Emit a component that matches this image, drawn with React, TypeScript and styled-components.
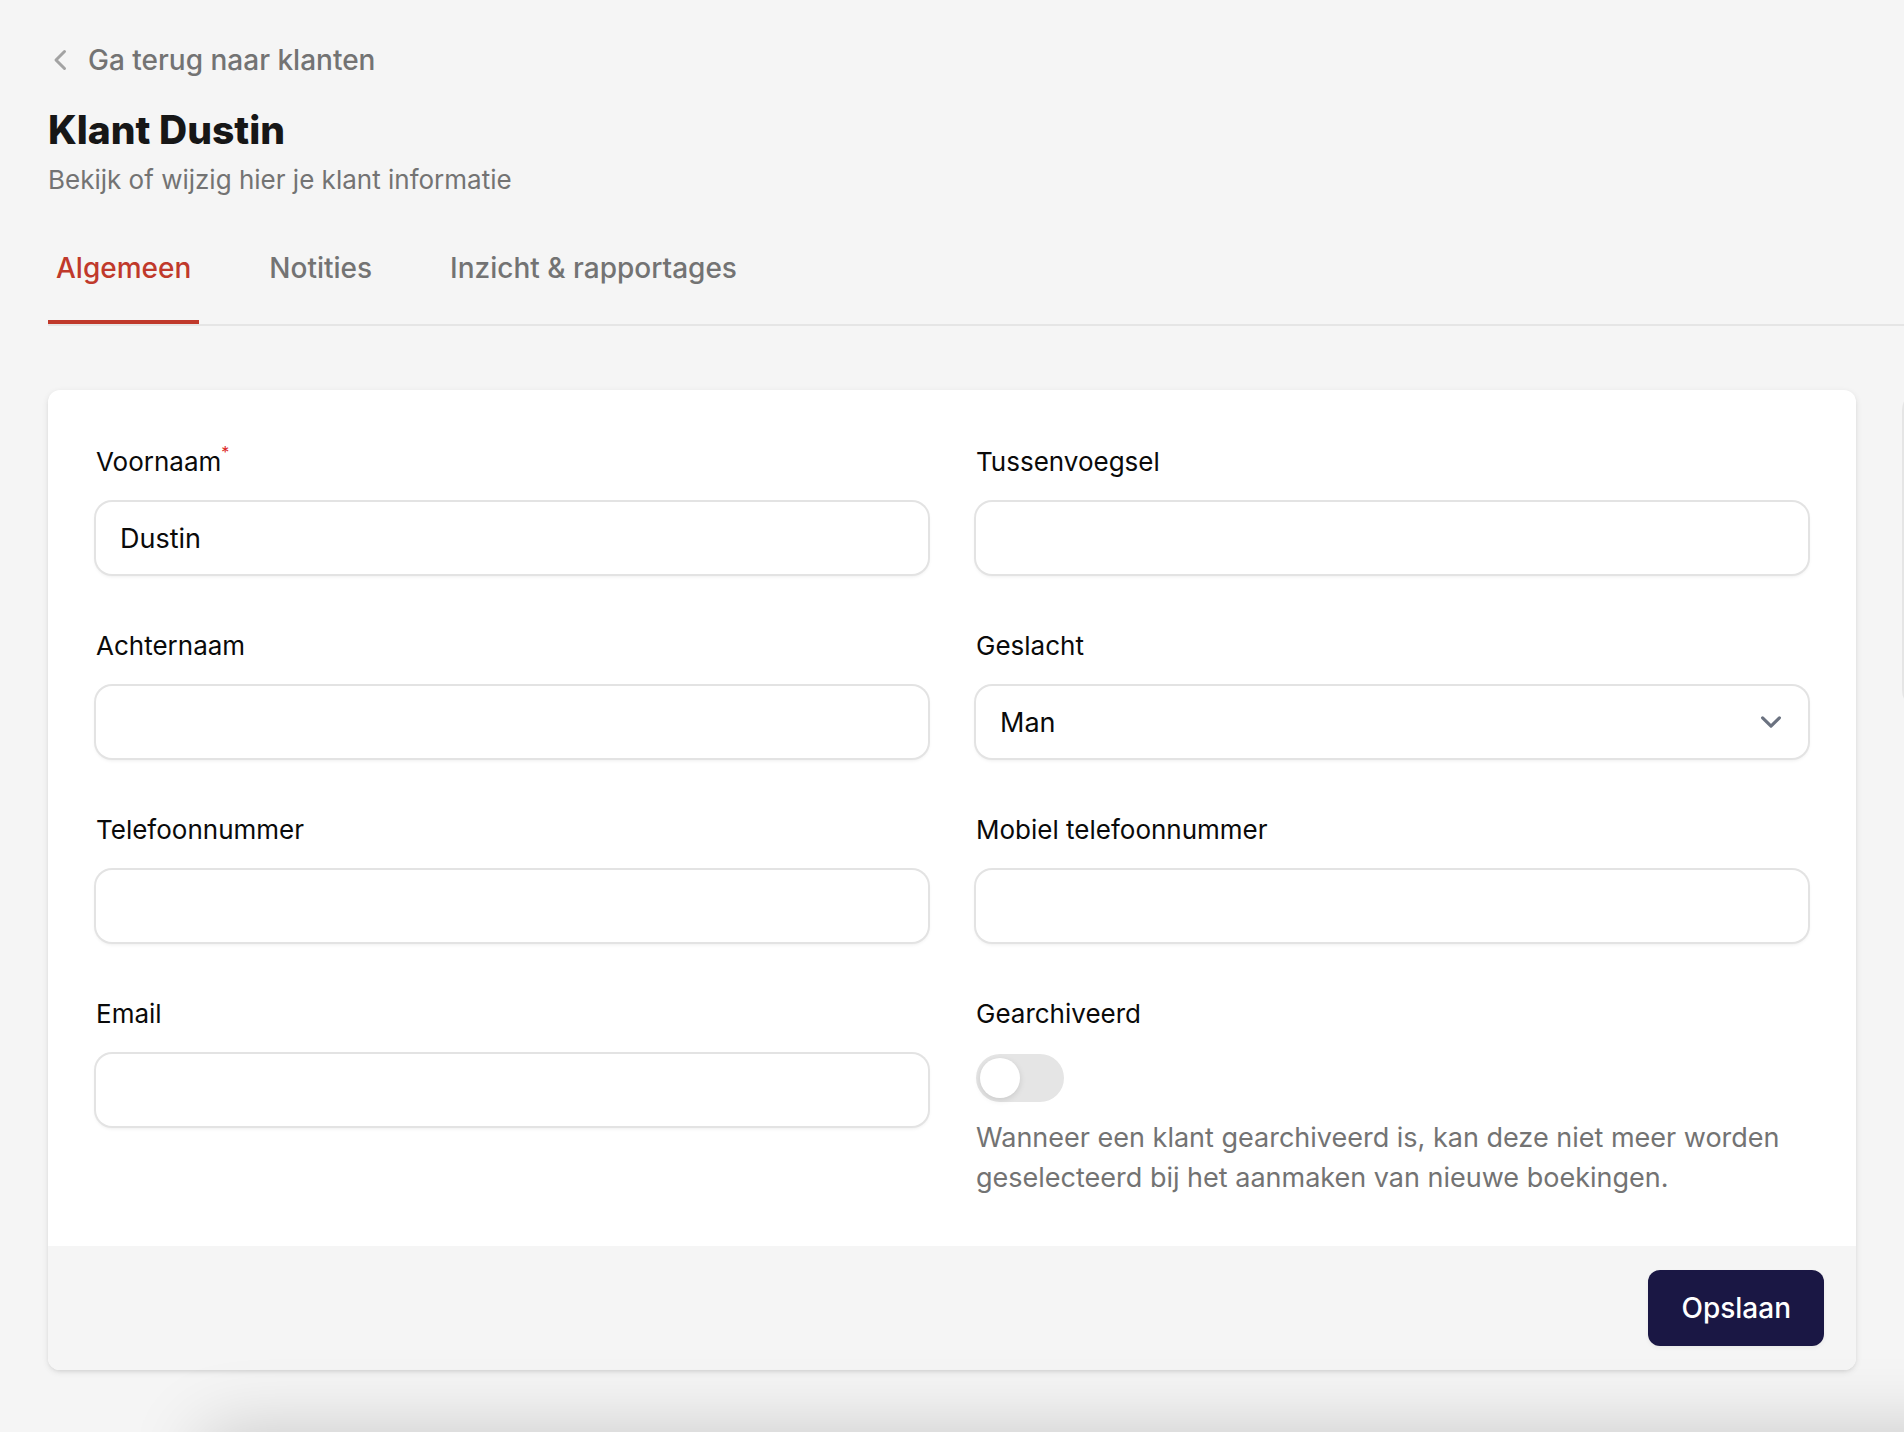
import React, { useState } from 'react';
import styled, { createGlobalStyle } from 'styled-components';

const GlobalStyle = createGlobalStyle`
  *, *::before, *::after { box-sizing: border-box; }
  body {
    margin: 0;
    background: #f5f5f5;
    color: #171717;
    font-family: Inter, "Liberation Sans", sans-serif;
  }
`;

const Page = styled.div`
  min-height: 100vh;
  padding: 40px 0 48px 48px;
  overflow: hidden;
`;

const BackLink = styled.a`
  display: inline-flex;
  align-items: center;
  gap: 16px;
  color: #737373;
  font-size: 28px;
  font-weight: 500;
  line-height: 40px;
  text-decoration: none;
`;

const BackIcon = styled.svg`
  width: 24px;
  height: 24px;
  color: #a3a3a3;
`;

const Header = styled.header`
  display: flex;
  flex-direction: column;
  align-items: flex-start;
`;

const Title = styled.h1`
  margin: 20px 0 0;
  font-size: 39px;
  font-weight: 800;
  line-height: 60px;
`;

const Subtitle = styled.p`
  margin: 0;
  color: #737373;
  font-size: 26px;
  line-height: 40px;
`;

const Tabs = styled.nav`
  display: flex;
  gap: 62px;
  margin-top: 48px;
  border-bottom: 2px solid #e5e5e5;
`;

const Tab = styled.a<{ $active?: boolean }>`
  padding: 0 8px 32px;
  border-bottom: 4px solid ${(p) => (p.$active ? '#c0392b' : 'transparent')};
  color: ${(p) => (p.$active ? '#c0392b' : '#737373')};
  font-size: 28px;
  font-weight: 500;
  line-height: 40px;
  text-decoration: none;
`;

const Content = styled.main`
  display: flex;
  align-items: flex-start;
  gap: 46px;
  margin-top: 64px;
`;

const Card = styled.form`
  flex: 1;
  min-width: 0;
  border-radius: 12px;
  background: #fff;
  box-shadow: 0 2px 6px rgba(0, 0, 0, 0.1), 0 2px 4px -2px rgba(0, 0, 0, 0.1);
  overflow: hidden;
`;

const SidePanel = styled.aside`
  flex: none;
  width: 48px;
  height: 320px;
  margin-right: -46px;
  border: 2px solid #e5e5e5;
  border-radius: 20px;
`;

const Fields = styled.div`
  display: grid;
  grid-template-columns: 1fr 1fr;
  gap: 48px;
  padding: 48px;
`;

const Field = styled.div`
  display: flex;
  flex-direction: column;
  align-items: flex-start;
  gap: 16px;
`;

const Label = styled.label`
  display: flex;
  color: #0a0a0a;
  font-size: 26px;
  line-height: 48px;
`;

const Required = styled.span`
  color: #dc2626;
  font-size: 16px;
  line-height: 28px;
`;

const controlStyle = `
  display: block;
  width: 100%;
  height: 72px;
  margin: 0;
  padding: 0 24px;
  border: 0;
  border-radius: 16px;
  background: #fff;
  box-shadow: 0 0 0 2px #e3e3e3, 0 2px 4px rgba(0, 0, 0, 0.1);
  color: #0a0a0a;
  font-family: inherit;
  font-size: 27px;
  appearance: none;
  outline: none;
`;

const TextInput = styled.input`
  ${controlStyle}
`;

const SelectBox = styled.div`
  position: relative;
  width: 100%;
`;

const Select = styled.select`
  ${controlStyle}
`;

const SelectIcon = styled.svg`
  position: absolute;
  top: 15px;
  right: 16px;
  width: 42px;
  height: 42px;
  color: #6b7280;
  pointer-events: none;
`;

const Switch = styled.input`
  width: 88px;
  height: 48px;
  margin: 0;
  padding: 4px;
  border-radius: 24px;
  background: ${(p) => (p.checked ? '#1a1744' : '#e5e5e5')};
  appearance: none;
  cursor: pointer;

  &::before {
    content: '';
    display: block;
    width: 40px;
    height: 40px;
    margin-left: ${(p) => (p.checked ? '40px' : '0')};
    border-radius: 50%;
    background: #fff;
    box-shadow: 0 2px 6px rgba(0, 0, 0, 0.12);
  }
`;

const Help = styled.p`
  margin: 0;
  color: #737373;
  font-size: 27px;
  line-height: 40px;
`;

const CardFooter = styled.footer`
  display: flex;
  justify-content: flex-end;
  padding: 24px 32px;
  background: #f5f5f5;
`;

const SaveButton = styled.button`
  height: 76px;
  padding: 0 33px;
  border: 0;
  border-radius: 12px;
  background: #1a1744;
  box-shadow: 0 2px 4px rgba(0, 0, 0, 0.05);
  color: #fff;
  font-family: inherit;
  font-size: 28px;
  font-weight: 500;
  cursor: pointer;
`;

const BottomShade = styled.div`
  position: fixed;
  top: 100%;
  left: 204px;
  right: -200px;
  height: 200px;
  box-shadow: 0 0 76px rgba(0, 0, 0, 0.19);
  pointer-events: none;
`;

type TextFieldProps = {
  id: string;
  label: string;
  type?: string;
  value?: string;
  required?: boolean;
};

function TextField({ id, label, type = 'text', value = '', required }: TextFieldProps) {
  return (
    <Field>
      <Label htmlFor={id}>
        {label}
        {required && <Required>*</Required>}
      </Label>
      <TextInput id={id} name={id} type={type} defaultValue={value} required={required} />
    </Field>
  );
}

export default function App() {
  const [archived, setArchived] = useState(false);

  return (
    <>
      <GlobalStyle />
      <Page>
        <Header>
          <BackLink href="#klanten">
            <BackIcon viewBox="0 0 24 24" fill="none" stroke="currentColor" aria-hidden="true">
              <path d="M16.5 3.5 8 12l8.5 8.5" strokeWidth="3" strokeLinecap="round" strokeLinejoin="round" />
            </BackIcon>
            Ga terug naar klanten
          </BackLink>
          <Title>Klant Dustin</Title>
          <Subtitle>Bekijk of wijzig hier je klant informatie</Subtitle>
        </Header>

        <Tabs>
          <Tab href="#algemeen" $active aria-current="page">Algemeen</Tab>
          <Tab href="#notities">Notities</Tab>
          <Tab href="#rapportages">Inzicht &amp; rapportages</Tab>
        </Tabs>

        <Content>
          <Card onSubmit={(e) => e.preventDefault()}>
            <Fields>
              <TextField id="voornaam" label="Voornaam" value="Dustin" required />
              <TextField id="tussenvoegsel" label="Tussenvoegsel" />
              <TextField id="achternaam" label="Achternaam" />
              <Field>
                <Label htmlFor="geslacht">Geslacht</Label>
                <SelectBox>
                  <Select id="geslacht" name="geslacht" defaultValue="man">
                    <option value="man">Man</option>
                    <option value="vrouw">Vrouw</option>
                  </Select>
                  <SelectIcon viewBox="0 0 20 20" fill="none" stroke="currentColor" aria-hidden="true">
                    <path d="m6 8 4 4 4-4" strokeWidth="1.5" strokeLinecap="round" strokeLinejoin="round" />
                  </SelectIcon>
                </SelectBox>
              </Field>
              <TextField id="telefoon" label="Telefoonnummer" type="tel" />
              <TextField id="mobiel" label="Mobiel telefoonnummer" type="tel" />
              <TextField id="email" label="Email" type="email" />
              <Field>
                <Label htmlFor="gearchiveerd">Gearchiveerd</Label>
                <Switch
                  id="gearchiveerd"
                  type="checkbox"
                  role="switch"
                  aria-describedby="gearchiveerd-uitleg"
                  checked={archived}
                  onChange={(e) => setArchived(e.target.checked)}
                />
                <Help id="gearchiveerd-uitleg">
                  Wanneer een klant gearchiveerd is, kan deze niet meer worden geselecteerd bij het
                  aanmaken van nieuwe boekingen.
                </Help>
              </Field>
            </Fields>
            <CardFooter>
              <SaveButton type="submit">Opslaan</SaveButton>
            </CardFooter>
          </Card>
          <SidePanel />
        </Content>
      </Page>
      <BottomShade />
    </>
  );
}
